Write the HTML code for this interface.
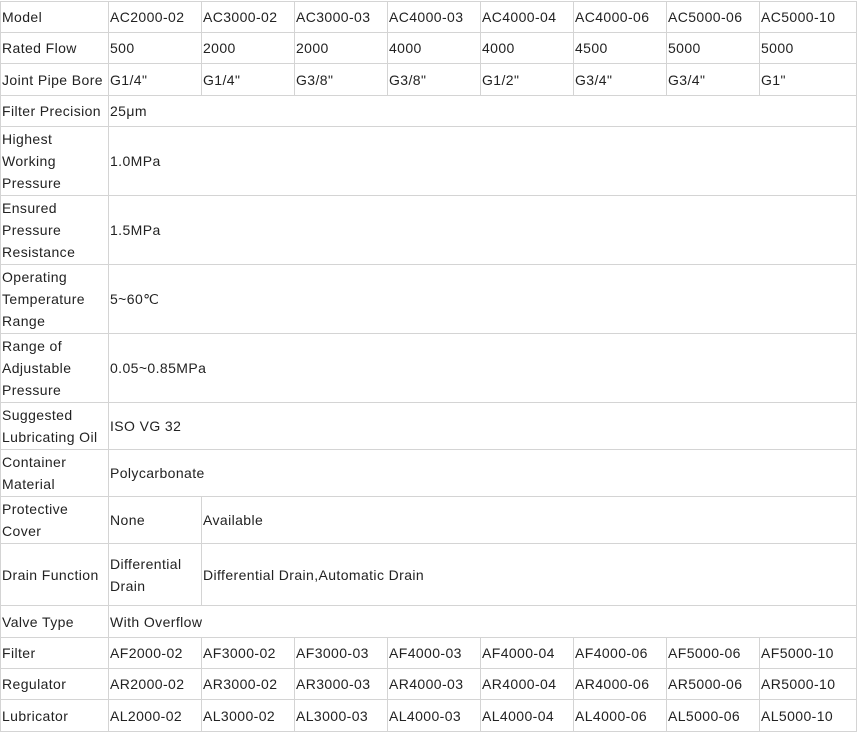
<!DOCTYPE html>
<html><head><meta charset="utf-8"><style>
html,body{margin:0;padding:0;background:#fff;}
table{border-collapse:collapse;table-layout:fixed;position:absolute;left:0;top:1px;width:856px;}
td{border:1px solid #d4d4d4;padding:0 0 0 1px;font:14px/22px "Liberation Sans",Arial,sans-serif;letter-spacing:0.4px;color:#222;vertical-align:middle;overflow:hidden;white-space:nowrap;}
td.w{white-space:normal;}
</style></head><body>
<table>
<colgroup><col style="width:108px"><col style="width:93px"><col style="width:93px"><col style="width:93px"><col style="width:93px"><col style="width:93px"><col style="width:93px"><col style="width:93px"><col style="width:97px"></colgroup>
<tr style="height:31px"><td>Model</td><td>AC2000-02</td><td>AC3000-02</td><td>AC3000-03</td><td>AC4000-03</td><td>AC4000-04</td><td>AC4000-06</td><td>AC5000-06</td><td>AC5000-10</td></tr>
<tr style="height:31px"><td>Rated Flow</td><td>500</td><td>2000</td><td>2000</td><td>4000</td><td>4000</td><td>4500</td><td>5000</td><td>5000</td></tr>
<tr style="height:32px"><td>Joint Pipe Bore</td><td>G1/4"</td><td>G1/4"</td><td>G3/8"</td><td>G3/8"</td><td>G1/2"</td><td>G3/4"</td><td>G3/4"</td><td>G1"</td></tr>
<tr style="height:31px"><td>Filter Precision</td><td colspan="8">25μm</td></tr>
<tr style="height:69px"><td class="w">Highest<br>Working<br>Pressure</td><td colspan="8">1.0MPa</td></tr>
<tr style="height:69px"><td class="w">Ensured<br>Pressure<br>Resistance</td><td colspan="8">1.5MPa</td></tr>
<tr style="height:69px"><td class="w">Operating<br>Temperature<br>Range</td><td colspan="8">5~60℃</td></tr>
<tr style="height:69px"><td class="w">Range of<br>Adjustable<br>Pressure</td><td colspan="8">0.05~0.85MPa</td></tr>
<tr style="height:47px"><td class="w">Suggested<br>Lubricating Oil</td><td colspan="8">ISO VG 32</td></tr>
<tr style="height:47px"><td class="w">Container<br>Material</td><td colspan="8">Polycarbonate</td></tr>
<tr style="height:47px"><td class="w">Protective<br>Cover</td><td>None</td><td colspan="7">Available</td></tr>
<tr style="height:62px"><td>Drain Function</td><td class="w">Differential<br>Drain</td><td colspan="7">Differential Drain,Automatic Drain</td></tr>
<tr style="height:32px"><td>Valve Type</td><td colspan="8">With Overflow</td></tr>
<tr style="height:31px"><td>Filter</td><td>AF2000-02</td><td>AF3000-02</td><td>AF3000-03</td><td>AF4000-03</td><td>AF4000-04</td><td>AF4000-06</td><td>AF5000-06</td><td>AF5000-10</td></tr>
<tr style="height:31px"><td>Regulator</td><td>AR2000-02</td><td>AR3000-02</td><td>AR3000-03</td><td>AR4000-03</td><td>AR4000-04</td><td>AR4000-06</td><td>AR5000-06</td><td>AR5000-10</td></tr>
<tr style="height:32px"><td>Lubricator</td><td>AL2000-02</td><td>AL3000-02</td><td>AL3000-03</td><td>AL4000-03</td><td>AL4000-04</td><td>AL4000-06</td><td>AL5000-06</td><td>AL5000-10</td></tr>
</table>
</body></html>
